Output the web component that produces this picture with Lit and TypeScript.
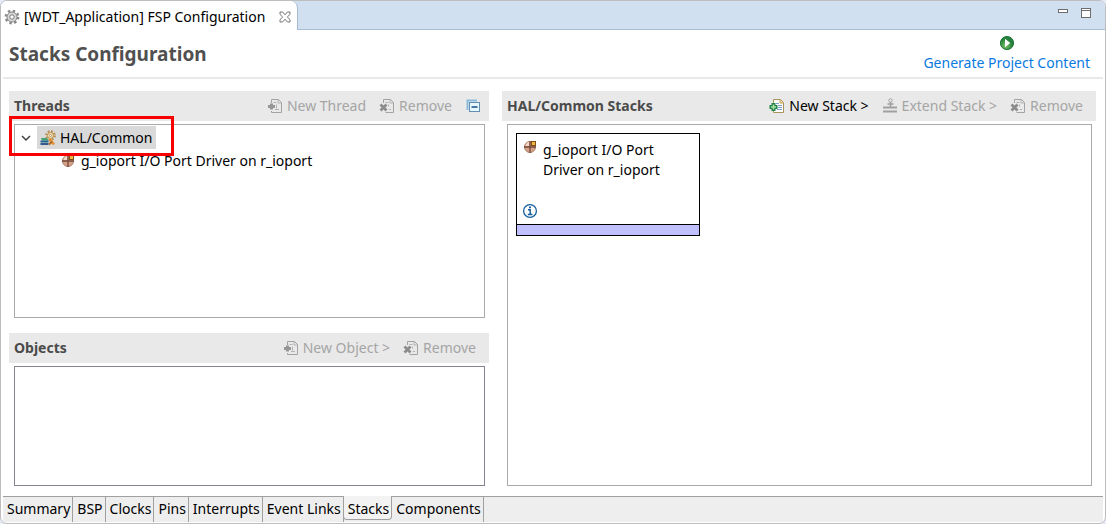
import { LitElement, html, css, svg } from "lit";
import { customElement, property, state } from "lit/decorators.js";

const glyphs: Record<string, unknown> = {
  gear: svg`<circle cx="8" cy="8" r="6.2" fill="none" stroke="#8a8a8a" stroke-width="2.4" stroke-dasharray="2.4 2.47"/><circle cx="8" cy="8" r="5" fill="#d6d6d6" stroke="#868686"/><circle cx="8" cy="8" r="2.2" fill="#fff" stroke="#7a7a7a"/>`,
  close: svg`<path d="M3 3h2.600L8 5.800 10.400 3H13v2.400L10.300 8 13 10.600V13h-2.600L8 10.200 5.600 13H3v-2.400L5.700 8 3 5.400z" fill="#fff" stroke="#777"/>`,
  minimize: svg`<rect x="3.500" y="4.500" width="9" height="3" fill="#fff" stroke="#6d6d6d"/>`,
  maximize: svg`<rect x="3.500" y="3.500" width="9" height="9" fill="#fff" stroke="#6d6d6d"/><path d="M4 5.500h8" stroke="#6d6d6d"/>`,
  run: svg`<defs><radialGradient id="g" cx=".4" cy=".7"><stop offset="0" stop-color="#7cc66a"/><stop offset="1" stop-color="#24803c"/></radialGradient></defs><circle cx="8" cy="8" r="6.600" fill="url(#g)" stroke="#237a3a"/><path d="M6 3.800 11.200 8 6 12.200z" fill="#fff"/>`,
  newOff: svg`<path d="M4.500 5V1.500h7l3 3v10h-10V13" fill="none" stroke="#a3a3a3"/><path d="M11 2v3h3M6.500 4.500h3M9.500 6.500v4M8 11.500h4" fill="none" stroke="#b2b2b2"/><path d="M4.500 5.500v6M1 8.500h7" stroke="#969696" stroke-width="3"/>`,
  newOn: svg`<path d="M4.500 1.500h7l3 3v10h-10z" fill="#fff" stroke="#a8935a"/><path d="M11 2v3h3" fill="#f1d99a" stroke="#c49d47"/><path d="M7 5.500h3M9 7.500h4M9 9.500h4M8 11.500h5" stroke="#7f9fc5"/><path d="M4.500 5v8M.5 9h8" stroke="#20834a" stroke-width="4"/><path d="M4.500 6.500v5M2 9h5" stroke="#a9e2a4" stroke-width="1.500"/>`,
  remove: svg`<path d="M4.500 5V1.500h7l3 3v10h-8" fill="none" stroke="#a3a3a3"/><path d="M11 2v3h3M6.500 4.500h3M9.500 6.500v2M10 11.500h2" fill="none" stroke="#b2b2b2"/><path d="m1.500 6.500 6 6M7.500 6.500l-6 6" stroke="#8c8c8c" stroke-width="2.800"/>`,
  extend: svg`<path d="M1 9.500h14M1 13.500h14" stroke="#a0a0a0" stroke-width="2"/><path d="M8.500 9V4M5.500 6h6" stroke="#a0a0a0" stroke-width="1.500"/><circle cx="8.500" cy="2.500" r="1.700" fill="#eee" stroke="#a0a0a0"/>`,
  collapse: svg`<path d="M2.500 12V2.500H12" fill="none" stroke="#8bbcd9" stroke-width="2"/><rect x="4.500" y="4.500" width="10" height="9" fill="#e6f8ff" stroke="#668eb4"/><path d="M6.500 9h6" stroke="#174c85" stroke-width="1.500"/>`,
  chevron: svg`<path d="m4 6 4 4 4-4" fill="none" stroke="#404040" stroke-width="1.500"/>`,
  hal: svg`<circle cx="10.500" cy="5.500" r="4.300" fill="none" stroke="#b58a47" stroke-width="2" stroke-dasharray="1.800 1.580"/><circle cx="10.500" cy="5.500" r="3" fill="#f5deb0" stroke="#b78b49"/><circle cx="10.500" cy="5.500" r="1" fill="#fff" stroke="#936d37" stroke-width=".6"/><path d="M1 8h6l1.500 2.500H2z" fill="#46a171"/><path d="M.5 10.500h8v2h-8z" fill="#24668d"/><path d="M.5 13h8v2h-8z" fill="#345b8a"/><path d="m9.500 9 4.500 5.500" stroke="#e6912c" stroke-width="2.600"/><path d="m9 14.500 3-3" stroke="#b6672b" stroke-width="2"/>`,
  module: svg`<circle cx="7" cy="8" r="5.500" fill="#d6a184" stroke="#a9806c"/><path d="M7 2v12M1 8h12" stroke="#74483d" stroke-width="1.300"/><path d="M6 3v4H2.500C3 5 4 3.500 6 3" fill="#f4d9c7"/><rect x="8.500" y="2.500" width="4" height="4" fill="#f3b63f" stroke="#80501b"/>`,
  info: svg`<circle cx="8" cy="8" r="6.400" fill="#fff" stroke="#17609d" stroke-width="1.300"/><path d="M6 6.800H8.200v4.700M5.800 11.500h4.700" fill="none" stroke="#17609d" stroke-width="1.500"/><path d="M7 4.300h2" stroke="#17609d" stroke-width="1.700"/>`,
};

@customElement("fsp-icon")
class FspIcon extends LitElement {
  @property() name = "gear";
  static styles = css`
    :host { display: block; flex: none; width: 16px; height: 16px; }
    svg { display: block; }
  `;
  render() {
    return html`<svg width="16" height="16" viewBox="0 0 16 16" aria-hidden="true">${glyphs[this.name]}</svg>`;
  }
}

type Action = { icon: string; label: string; disabled?: boolean };

@customElement("section-bar")
class SectionBar extends LitElement {
  @property() heading = "";
  @property({ attribute: false }) actions: Action[] = [];
  @property({ type: Boolean }) collapsible = false;
  static styles = css`
    :host { display: flex; align-items: center; height: 30px; padding: 0 5px; background: #e9e9e9; box-sizing: border-box; }
    .heading { margin: 0; font-size: 14px; line-height: 20px; font-weight: 700; color: #4b4b4b; }
    .tools { display: flex; margin-left: auto; gap: 13px; padding-right: 8px; }
    .compact { padding-right: 3px; }
    .tool { display: flex; align-items: center; gap: 4px; padding: 0; border: 0; background: none; font: inherit; color: #000; white-space: nowrap; }
    .tool:disabled { color: #a5a5a5; }
  `;
  render() {
    return html`<h2 class="heading">${this.heading}</h2>
      <div class="tools ${this.collapsible ? "compact" : ""}">
        ${this.actions.map(
          (a) => html`<button class="tool" ?disabled=${a.disabled}>
            <fsp-icon name=${a.icon}></fsp-icon>${a.label}
          </button>`
        )}
        ${this.collapsible
          ? html`<button class="tool" aria-label="Collapse all"><fsp-icon name="collapse"></fsp-icon></button>`
          : ""}
      </div>`;
  }
}

@customElement("app-root")
class AppRoot extends LitElement {
  @state() page = "Stacks";
  static styles = css`
    :host { display: block; font: 14px/20px "Noto Sans", "Open Sans", sans-serif; color: #000; background: #e6eaf6; }
    .frame { display: flex; flex-direction: column; min-height: 100vh; box-sizing: border-box; border: 1px solid #bdbdbd; border-radius: 7px; background: #fff; overflow: hidden; }
    .strip { display: flex; height: 29px; box-sizing: border-box; background: #d1e0f0; }
    .doc { display: flex; align-items: center; gap: 4px; padding: 3px 4px 0 3px; background: #fff; border-right: 1px solid #a7b9cf; border-top-right-radius: 7px; white-space: nowrap; }
    .doc .plain { margin-left: 8px; }
    .filler { display: flex; flex: 1; justify-content: flex-end; align-items: flex-start; gap: 7px; padding: 4px 11px 0 0; border-bottom: 1px solid #a9bdd5; }
    .plain { padding: 0; border: 0; background: none; }
    .head { display: flex; align-items: center; justify-content: space-between; height: 47px; margin: 0 2px; padding: 0 13px 0 6px; border-bottom: 2px solid #e9e9e9; }
    .title { margin: 0; font-size: 19px; line-height: 24px; font-weight: 700; color: #505050; }
    .generate { display: flex; flex-direction: column; align-items: center; gap: 2px; color: #0a7adf; text-decoration: none; }
    .body { display: grid; grid-template-columns: 480fr 594fr; gap: 13px; flex: 1; padding: 12px 9px 10px 8px; }
    .column { display: flex; flex-direction: column; min-width: 0; }
    .box { margin: 3px 4px 0 5px; border: 1px solid #a9a9a9; box-sizing: border-box; }
    .threads { flex: 194 0 auto; margin-bottom: 15px; }
    .objects { flex: 120 0 auto; min-height: 120px; border-color: #858592; }
    .stacks { flex: 1; padding: 8px; }
    .tree, .branch { list-style: none; margin: 0; padding: 0; }
    .tree { padding: 1px 0 0 3px; min-height: 191px; }
    .row { display: flex; align-items: center; position: relative; height: 23px; }
    .node { display: flex; align-items: center; gap: 4px; height: 23px; padding: 0 4px 0 3px; margin-left: 3px; }
    .picked { background: #d9d9d9; }
    .child { padding-left: 37px; }
    .marker { position: absolute; z-index: 1; left: -9px; top: -10px; width: 165px; height: 40px; box-sizing: border-box; border: 3px solid #f80000; pointer-events: none; }
    .card { width: 184px; box-sizing: border-box; border: 1px solid #000; background: #fff; }
    .name { display: flex; align-items: flex-start; gap: 4px; padding: 5px 6px 23px; }
    .label { padding-top: 1px; }
    .note { padding: 0 5px 5px; }
    .foot { height: 10px; border-top: 1px solid #000; background: #c0c0ff; }
    .tabs { display: flex; height: 26px; margin: 0 2px 1px; box-sizing: border-box; border-top: 1px solid #a0a0a0; background: #eee; }
    .tab { display: flex; align-items: flex-start; padding: 2px 2px 0 4px; border: 0; border-right: 1px solid #a0a0a0; background: none; font: inherit; color: #000; white-space: nowrap; }
    .active { height: 24px; margin: -1px 0 0 -1px; padding-top: 3px; border: 1px solid #a0a0a0; border-top: 0; border-radius: 0 0 4px 4px; background: #f3f3f3; }
  `;

  render() {
    const pages = ["Summary", "BSP", "Clocks", "Pins", "Interrupts", "Event Links", "Stacks", "Components"];
    return html`<main class="frame">
      <div class="strip">
        <div class="doc">
          <fsp-icon name="gear"></fsp-icon><span>[WDT_Application] FSP Configuration</span>
          <button class="plain" aria-label="Close editor"><fsp-icon name="close"></fsp-icon></button>
        </div>
        <div class="filler">
          <button class="plain" aria-label="Minimize"><fsp-icon name="minimize"></fsp-icon></button>
          <button class="plain" aria-label="Maximize"><fsp-icon name="maximize"></fsp-icon></button>
        </div>
      </div>
      <header class="head">
        <h1 class="title">Stacks Configuration</h1>
        <a class="generate" href="#generate"><fsp-icon name="run"></fsp-icon>Generate Project Content</a>
      </header>
      <div class="body">
        <div class="column">
          <section-bar heading="Threads" collapsible .actions=${[
            { icon: "newOff", label: "New Thread", disabled: true },
            { icon: "remove", label: "Remove", disabled: true },
          ]}></section-bar>
          <div class="box threads">
            <ul class="tree" role="tree">
              <li role="treeitem" aria-expanded="true" aria-selected="true">
                <div class="row">
                  <fsp-icon name="chevron"></fsp-icon>
                  <span class="node picked"><fsp-icon name="hal"></fsp-icon>HAL/Common</span>
                  <span class="marker"></span>
                </div>
                <ul class="branch" role="group">
                  <li class="row child" role="treeitem">
                    <span class="node"><fsp-icon name="module"></fsp-icon>g_ioport I/O Port Driver on r_ioport</span>
                  </li>
                </ul>
              </li>
            </ul>
          </div>
          <section-bar heading="Objects" .actions=${[
            { icon: "newOff", label: "New Object >", disabled: true },
            { icon: "remove", label: "Remove", disabled: true },
          ]}></section-bar>
          <div class="box objects"></div>
        </div>
        <div class="column">
          <section-bar heading="HAL/Common Stacks" .actions=${[
            { icon: "newOn", label: "New Stack >" },
            { icon: "extend", label: "Extend Stack >", disabled: true },
            { icon: "remove", label: "Remove", disabled: true },
          ]}></section-bar>
          <div class="box stacks">
            <article class="card">
              <div class="name"><fsp-icon name="module"></fsp-icon><span class="label">g_ioport I/O Port Driver on r_ioport</span></div>
              <div class="note"><fsp-icon name="info"></fsp-icon></div>
              <div class="foot"></div>
            </article>
          </div>
        </div>
      </div>
      <nav class="tabs" role="tablist">
        ${pages.map(
          (p) => html`<button class="tab ${p === this.page ? "active" : ""}" role="tab" aria-selected=${p === this.page} @click=${() => (this.page = p)}>${p}</button>`
        )}
      </nav>
    </main>`;
  }
}
